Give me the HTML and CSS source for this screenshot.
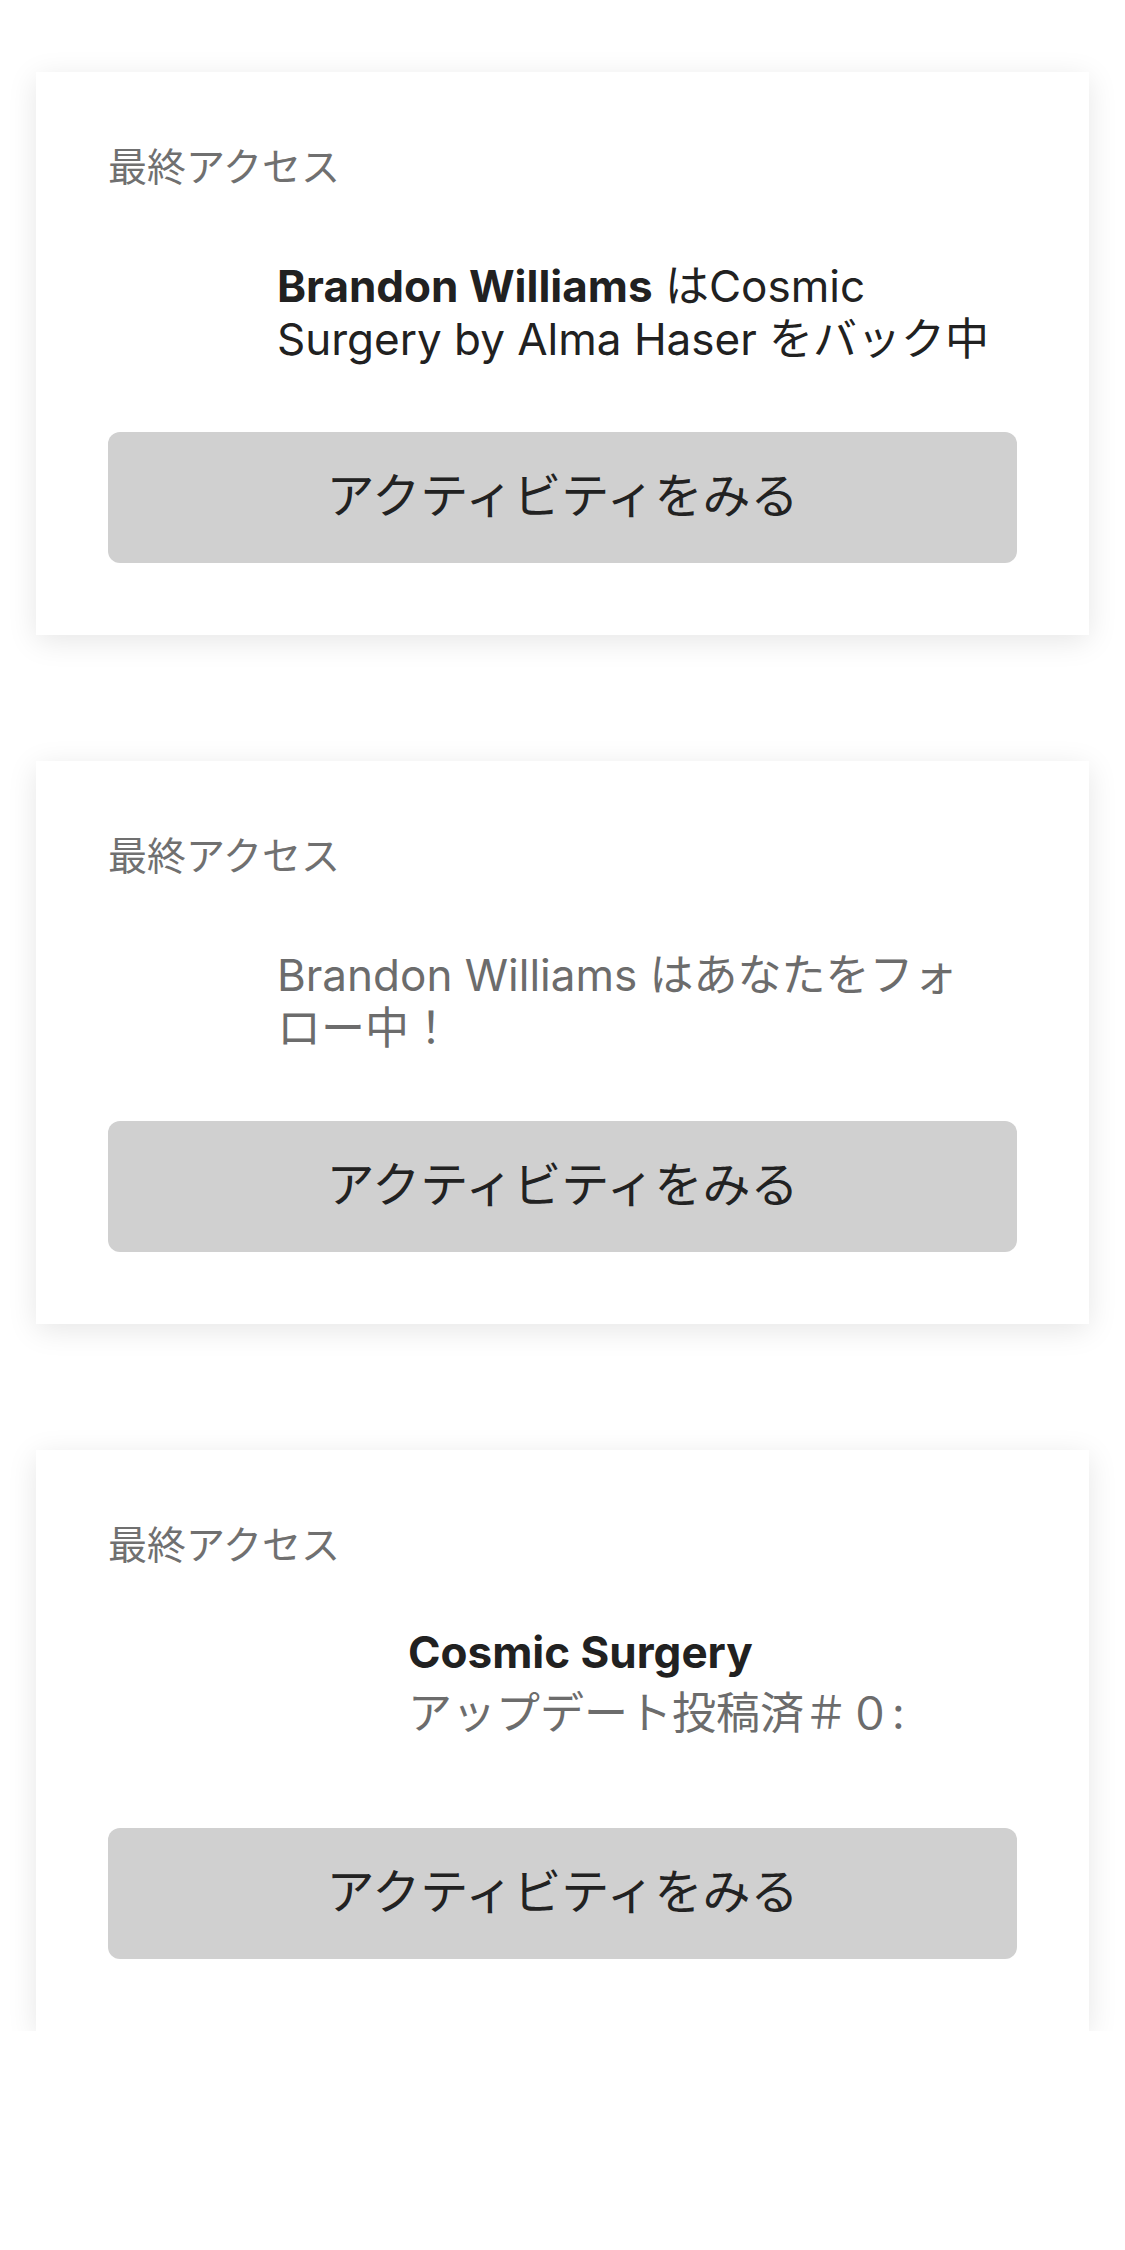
FILE: index.html
```html
<!DOCTYPE html>
<html lang="ja">
<head>
<meta charset="utf-8">
<title>最終アクセス</title>
<link rel="stylesheet" href="styles.css">
</head>
<body>
<main class="feed">
  <section class="card">
    <div class="label">最終アクセス</div>
    <div class="row">
      <div class="media media-avatar"></div>
      <p class="text"><strong>Brandon Williams</strong> はCosmic Surgery by Alma Haser をバック中</p>
    </div>
    <button class="action">アクティビティをみる</button>
  </section>

  <section class="card">
    <div class="label">最終アクセス</div>
    <div class="row">
      <div class="media media-avatar"></div>
      <p class="text text-muted">Brandon Williams はあなたをフォロー中！</p>
    </div>
    <button class="action">アクティビティをみる</button>
  </section>

  <section class="card">
    <div class="label">最終アクセス</div>
    <div class="row row-release">
      <div class="media media-cover"></div>
      <div class="release">
        <p class="release-title">Cosmic Surgery</p>
        <p class="release-sub">アップデート投稿済＃０:</p>
      </div>
    </div>
    <button class="action action-release">アクティビティをみる</button>
  </section>
</main>
</body>
</html>
```

FILE: styles.css
```css
* {
  box-sizing: border-box;
}

html, body {
  margin: 0;
  padding: 0;
  background: #ffffff;
}

body {
  font-family: Inter, "Noto Sans CJK JP", sans-serif;
  color: #212121;
  width: 1125px;
}

.feed {
  display: flex;
  flex-direction: column;
  gap: 126px;
  padding: 72px 36px 0;
}

.card {
  background: #ffffff;
  box-shadow: 0 6px 28px rgba(0, 0, 0, 0.10);
  padding: 72px;
  display: flex;
  flex-direction: column;
}

.label {
  font-size: 39px;
  line-height: 46px;
  color: #707070;
}

.row {
  display: flex;
  align-items: flex-start;
  margin-top: 70px;
}

.media {
  flex: none;
}

.media-avatar {
  width: 169px;
}

.media-cover {
  width: 300px;
}

.text {
  margin: 0;
  flex: 1;
  font-size: 44px;
  line-height: 53px;
  color: #212121;
  line-break: strict;
}

.text strong {
  font-weight: 700;
}

.text-muted {
  color: #6c6c6c;
}

.row-release {
  margin-top: 58px;
}

.release {
  flex: 1;
}

.release-title {
  margin: 0;
  font-size: 44px;
  line-height: 53px;
  font-weight: 700;
  color: #212121;
}

.release-sub {
  margin: 8px 0 0;
  font-size: 44px;
  line-height: 53px;
  color: #6c6c6c;
}

.action {
  display: block;
  width: 100%;
  height: 131px;
  margin-top: 66px;
  border: none;
  border-radius: 12px;
  background: #d0d0d0;
  color: #222222;
  font-family: Inter, "Noto Sans CJK JP", sans-serif;
  font-size: 48px;
  padding: 0 0 12px;
}

.action-release {
  margin-top: 88px;
}
```
